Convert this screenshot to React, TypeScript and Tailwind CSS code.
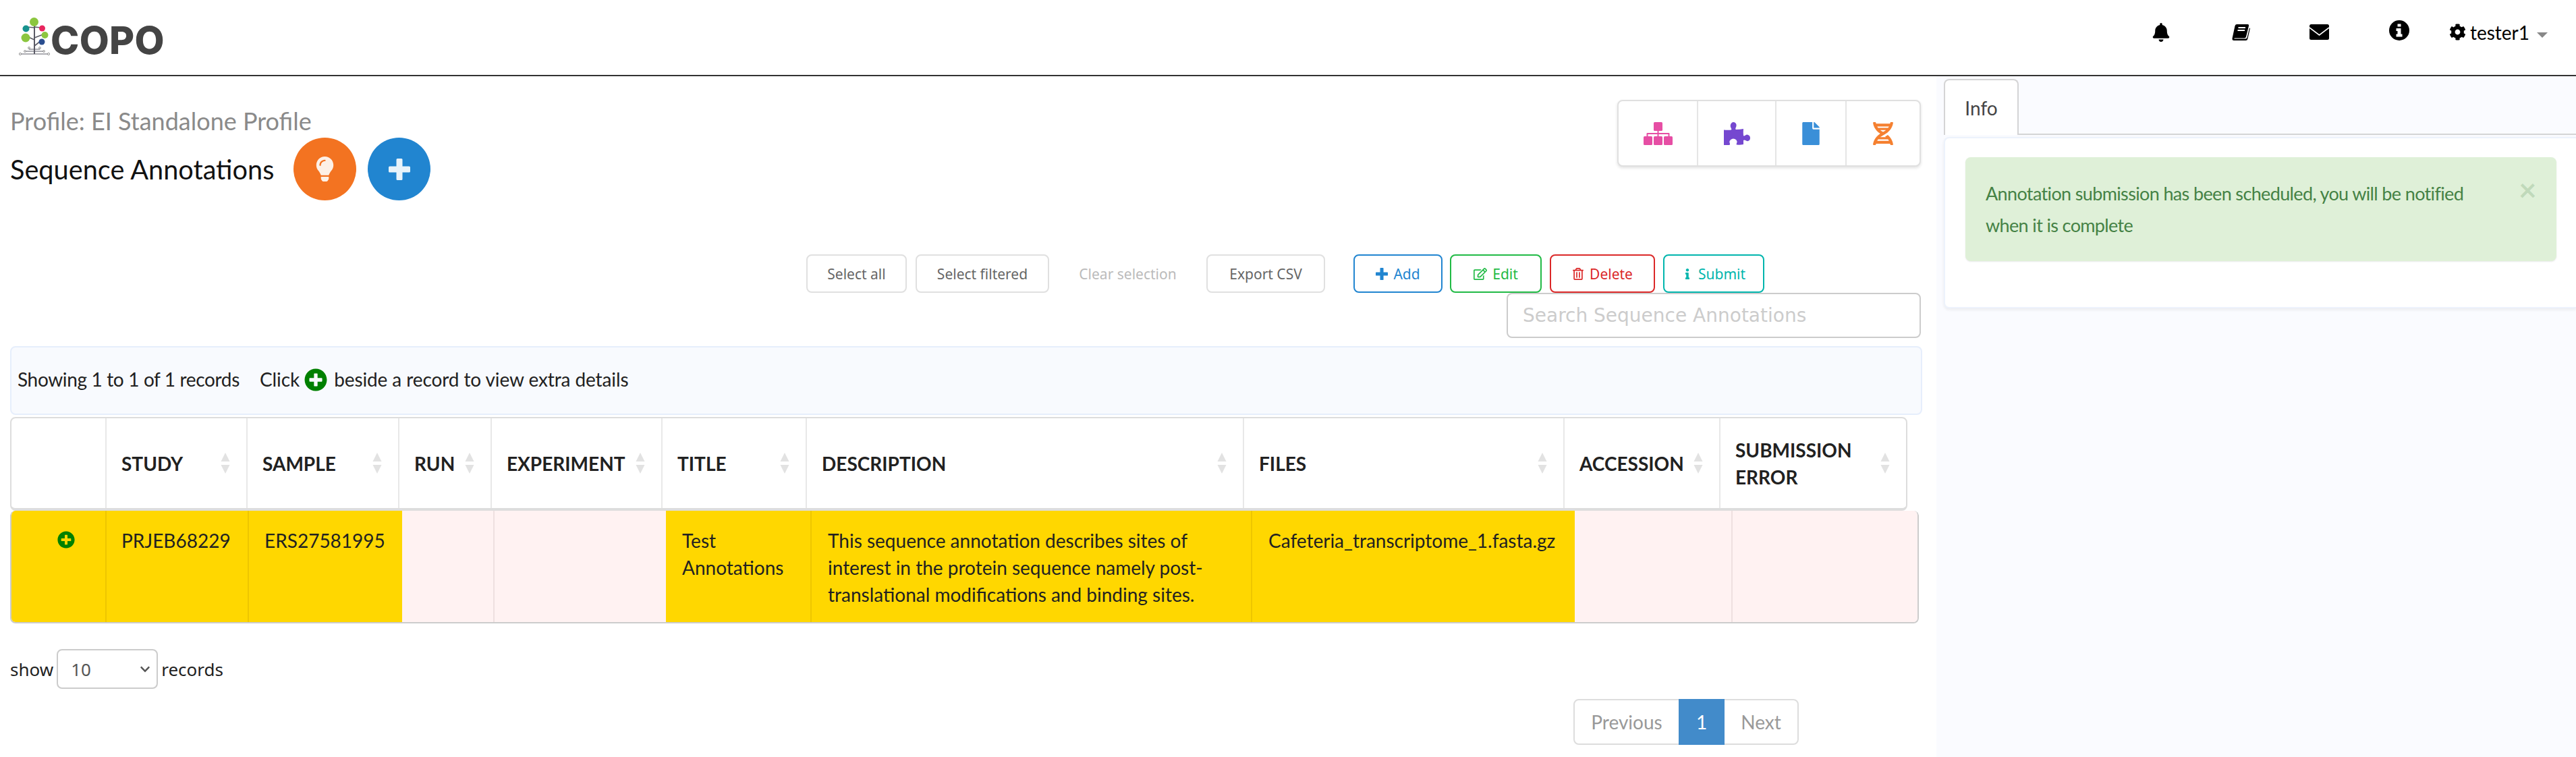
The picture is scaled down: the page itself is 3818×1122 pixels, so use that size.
// App.tsx - Sequence annotations page
import { FaBell, FaChevronDown, FaCog, FaDna, FaFile, FaInfo, FaLightbulb, FaPlusCircle, FaRegEdit, FaRegTrashAlt } from 'react-icons/fa'

const headerCols = [
  { label: '', width: 'w-[141px]' },
  { label: 'STUDY', width: 'w-[209px]' },
  { label: 'SAMPLE', width: 'w-[225px]' },
  { label: 'RUN', width: 'w-[137px]' },
  { label: 'EXPERIMENT', width: 'w-[253px]' },
  { label: 'TITLE', width: 'w-[214px]' },
  { label: 'DESCRIPTION', width: 'w-[648px]' },
  { label: 'FILES', width: 'w-[475px]' },
  { label: 'ACCESSION', width: 'w-[231px]' },
  { label: 'SUBMISSION ERROR', width: 'w-[275px]' },
]

function Logo() {
  return (
    <svg width="46" height="57" viewBox="0 0 46 57" className="shrink-0">
      <g stroke="#5b5b66" strokeWidth="1.6" fill="none">
        <path d="M23 6V54" strokeWidth="2" />
        <path d="M23 15L12 14M23 14L33 15M23 33L12 28M23 30L36 25M23 42L32 35" />
        <path d="M2 54H44M9 50H37M15 45V47H31V45" strokeWidth="1" />
      </g>
      <g fill="#fff" stroke="#777" strokeWidth="0.8">
        <circle cx="2" cy="54" r="1.6" />
        <circle cx="44" cy="54" r="1.6" />
        <circle cx="9" cy="50" r="1.4" />
        <circle cx="37" cy="50" r="1.4" />
        <circle cx="15" cy="45" r="1.4" />
        <circle cx="31" cy="45" r="1.4" />
      </g>
      <circle cx="22.5" cy="6.5" r="6.5" fill="#8cc63f" />
      <circle cx="10.5" cy="16.5" r="5" fill="#17938e" />
      <circle cx="34.5" cy="16" r="4.5" fill="#e8265e" />
      <circle cx="10" cy="30" r="6.5" fill="#8cc63f" />
      <circle cx="38.5" cy="26" r="5" fill="#8cc63f" />
      <circle cx="34" cy="36" r="4.5" fill="#2a4d8f" />
    </svg>
  )
}

function BookIcon() {
  return (
    <svg width="27" height="24" viewBox="0 0 27 24">
      <path d="M7 0H23.5Q25.5 0 25 2.5L21 18.5Q20.5 20.5 18.5 20.5H4.5Q3 20.5 3.4 21.6H20Q22 21.6 22.6 19.5L26 5.5L27 6L23.4 21.5Q23 24 20.5 24H3Q0 24 0.6 20.5L4.5 2.5Q5 0 7 0Z" fill="#000" />
      <path d="M9.5 5H20M8.5 9H19" stroke="#fff" strokeWidth="2" />
    </svg>
  )
}

function EnvelopeIcon() {
  return (
    <svg width="29" height="23" viewBox="0 0 29 23">
      <rect x="0" y="0" width="29" height="23" rx="2.5" fill="#000" />
      <path d="M0 5L14.5 16L29 5" stroke="#fff" strokeWidth="1.6" fill="none" />
    </svg>
  )
}

function InfoIcon() {
  return (
    <svg width="30" height="30" viewBox="0 0 30 30">
      <circle cx="15" cy="15" r="15" fill="#000" />
      <path d="M12.5 5.5H17.5V9.5H12.5ZM10.5 12H17.5V20.5H19.5V24.5H10.5V20.5H12.5V16H10.5Z" fill="#fff" />
    </svg>
  )
}

function PlusIcon({ size }: { size: number }) {
  return (
    <svg width={size} height={size} viewBox="0 0 32 32" fill="currentColor">
      <path d="M11.5 1.5Q11.5 0 13 0H19Q20.5 0 20.5 1.5V11.5H30.5Q32 11.5 32 13V19Q32 20.5 30.5 20.5H20.5V30.5Q20.5 32 19 32H13Q11.5 32 11.5 30.5V20.5H1.5Q0 20.5 0 19V13Q0 11.5 1.5 11.5H11.5Z" />
    </svg>
  )
}

function SitemapIcon() {
  return (
    <svg width="43" height="34" viewBox="0 0 43 34" fill="currentColor">
      <rect x="15" y="0" width="13" height="13" rx="1.5" />
      <rect x="0" y="21" width="13" height="13" rx="1.5" />
      <rect x="15" y="21" width="13" height="13" rx="1.5" />
      <rect x="30" y="21" width="13" height="13" rx="1.5" />
      <path d="M20.5 13H22.5V16H37.5Q38.5 16 38.5 17V21H36.5V18H22.5V21H20.5V18H6.5V21H4.5V17Q4.5 16 5.5 16H20.5Z" />
    </svg>
  )
}

function PuzzleIcon() {
  return (
    <svg width="39" height="34" viewBox="0 0 39 34" fill="currentColor">
      <path d="M0 11.5Q6 12 11 11.5Q12 10.5 10.5 8.5Q9 6.5 10 3.5Q11.5 0 14 0Q17.5 0 18.5 3.5Q19 6.5 17.5 8.5Q16.5 10.5 18 11Q24 11 29 10Q28.5 15 29 20Q30 21 32 19.5Q34 18 36 19Q39 20 39 23.5Q39 27 36 28Q34 28.5 32 27Q30 26 29 27V33Q24 34 19 33.5Q18 33 19 31.5Q20.5 29 18.5 26.5Q16.5 24.5 13.5 24.5Q10 25 8.5 28Q8 30 9 32Q9.5 33.5 8 34H0Z" />
    </svg>
  )
}

function SortArrows() {
  return (
    <svg width="14" height="31" viewBox="0 0 14 31" className="shrink-0">
      <path d="M7 0L13.5 13H0.5Z" fill="#e2e2e2" />
      <path d="M0.5 18H13.5L7 31Z" fill="#e2e2e2" />
    </svg>
  )
}

function ToolButton({ children, className }: { children: React.ReactNode; className: string }) {
  return (
    <button className={`h-[57px] rounded-lg border-2 bg-white font-['Noto_Sans',sans-serif] text-[21px] flex items-center justify-center gap-[8px] ${className}`}>
      {children}
    </button>
  )
}

export default function App() {
  return (
    <div className="w-[3818px] h-[1122px] overflow-hidden bg-white font-['Lato',sans-serif] text-[28px] leading-[40px] text-[#212121]">
      <header className="h-[113px] border-b-2 border-[#333] flex">
        <div className="flex items-start pl-[28px] pt-[26px]">
          <Logo />
          <span className="ml-[1px] mt-[4px] font-['Inter',sans-serif] font-extrabold text-[57px] leading-[60px] tracking-[0.3px] text-[#444]">COPO</span>
        </div>
        <nav className="ml-auto flex items-center pr-[42px] text-black pb-[16px]">
          <FaBell size={28} />
          <span className="ml-[91px]"><BookIcon /></span>
          <span className="ml-[88px]"><EnvelopeIcon /></span>
          <span className="ml-[89px] -mt-[6px]"><InfoIcon /></span>
          <FaCog size={25} className="ml-[59px]" />
          <span className="ml-[6px]">tester1</span>
          <span className="ml-[11px] mt-[8px] w-0 h-0 border-x-[8px] border-x-transparent border-t-[8px] border-t-[#888]" />
        </nav>
      </header>

      <div className="flex h-[1009px]">
        <main className="w-[2870px] px-[15px]">
          <div className="h-[264px] flex justify-between">
            <div className="pt-[44px]">
              <div className="text-[36px] leading-[44px] text-[#8a8a8a]">Profile: EI Standalone Profile</div>
              <div className="flex items-center mt-[3px]">
                <h1 className="text-[39.7px] leading-[50px] text-[#111] w-[420px]">Sequence Annotations</h1>
                <button className="w-[93px] h-[93px] rounded-full bg-[#f37321] flex items-center justify-center text-[#fdf0e6]">
                  <FaLightbulb size={37} />
                </button>
                <button className="ml-[17px] w-[93px] h-[93px] rounded-full bg-[#2185d0] flex items-center justify-center text-[#e8f3fa]">
                  <PlusIcon size={32} />
                </button>
              </div>
            </div>
            <div className="mt-[35px] mr-[8px] w-[450px] h-[99px] flex rounded-lg border-2 border-[#e0e0e0] bg-white shadow-[0_2px_4px_rgba(0,0,0,0.12)]">
              <div className="w-[118px] flex items-center justify-center border-r-2 border-[#e5e5e5] text-[#e64ea4]"><SitemapIcon /></div>
              <div className="w-[116px] flex items-center justify-center border-r-2 border-[#e5e5e5] text-[#7548d0]"><PuzzleIcon /></div>
              <div className="w-[104px] flex items-center justify-center border-r-2 border-[#e5e5e5] text-[#3a8fd8]"><FaFile size={34} /></div>
              <div className="flex-1 flex items-center justify-center text-[#f58030]"><FaDna size={34} /></div>
            </div>
          </div>

          <div className="flex justify-end pr-[240px]">
            <ToolButton className="w-[149px] border-[#e0e0e0] text-[#666]">Select all</ToolButton>
            <ToolButton className="ml-[13px] w-[198px] border-[#e0e0e0] text-[#666]">Select filtered</ToolButton>
            <span className="w-[233px] h-[57px] flex items-center justify-center font-['Noto_Sans',sans-serif] text-[21px] text-[#bbb]">Clear selection</span>
            <ToolButton className="w-[176px] border-[#e0e0e0] text-[#666]">Export CSV</ToolButton>
            <ToolButton className="ml-[42px] w-[132px] border-[#2185d0] text-[#2185d0]"><PlusIcon size={18} />Add</ToolButton>
            <ToolButton className="ml-[11px] w-[136px] border-[#21ba45] text-[#21ba45]"><FaRegEdit size={20} />Edit</ToolButton>
            <ToolButton className="ml-[12px] w-[156px] border-[#db2828] text-[#db2828]"><FaRegTrashAlt size={18} />Delete</ToolButton>
            <ToolButton className="ml-[12px] w-[150px] border-[#00b5ad] text-[#00b5ad]"><FaInfo size={16} />Submit</ToolButton>
          </div>

          <div className="flex justify-end pr-[8px]">
            <input
              readOnly
              placeholder="Search Sequence Annotations"
              className="w-[614px] h-[67px] rounded-lg border-2 border-[#ccc] pl-[22px] pr-[24px] font-['DejaVu_Sans',sans-serif] text-[28px] placeholder:text-[#ccc] outline-none"
            />
          </div>

          <div className="mt-[12px] mr-[6px] h-[102px] rounded-lg border-2 border-[#e6eefc] bg-[#f8fafe] flex items-start pt-[27px] pl-[9px]">
            <span className="tracking-[-0.35px]">Showing 1 to 1 of 1 records</span>
            <span className="ml-[30px] tracking-[-0.1px]">Click</span>
            <FaPlusCircle size={34} className="ml-[7px] mt-[4px] text-[#008000]" />
            <span className="ml-[10px] tracking-[-0.1px]">beside a record to view extra details</span>
          </div>

          <table className="mt-[3px] w-[2812px] table-fixed border-separate border-spacing-0 rounded-lg border-2 border-b-4 border-[#ddd] bg-white">
            <thead>
              <tr>
                {headerCols.map((col, i) => (
                  <th key={col.label} className={`${col.width} h-[133px] p-0 text-left font-bold ${i < headerCols.length - 1 ? 'border-r-2 border-[#e8e8e8]' : ''}`}>
                    {col.label && (
                      <div className="flex items-center justify-between pl-[22px] pr-[24px]">
                        <span>{col.label}</span>
                        <SortArrows />
                      </div>
                    )}
                  </th>
                ))}
              </tr>
            </thead>
          </table>

          <table className="w-[2829px] table-fixed border-separate border-spacing-0 rounded-lg border-2 border-t-0 border-[#ccc] overflow-hidden">
            <tbody>
              <tr className="align-top">
                <td className="w-[141px] h-[165px] pt-[30px] pl-[68px] bg-[#ffd700] border-r-2 border-[#eec600]">
                  <FaPlusCircle size={26} className="text-[#008000]" />
                </td>
                <td className="w-[211px] pt-[24px] pl-[22px] bg-[#ffd700] border-r-2 border-[#eec600]">PRJEB68229</td>
                <td className="w-[227px] pt-[24px] pl-[23px] bg-[#ffd700]">ERS27581995</td>
                <td className="w-[137px] bg-[#fff2f2] border-r-2 border-[#eee0e0]" />
                <td className="w-[254px] bg-[#fff2f2]" />
                <td className="w-[216px] pt-[24px] px-[24px] bg-[#ffd700] border-r-2 border-[#eec600]">Test Annotations</td>
                <td className="w-[653px] pt-[24px] px-[24px] bg-[#ffd700] border-r-2 border-[#eec600]">
                  This sequence annotation describes sites of interest in the protein sequence namely post-translational modifications and binding sites.
                </td>
                <td className="w-[478px] pt-[24px] pl-[24px] bg-[#ffd700]">Cafeteria_transcriptome_1.fasta.gz</td>
                <td className="w-[234px] bg-[#fff2f2] border-r-2 border-[#eee0e0]" />
                <td className="w-[274px] bg-[#fff2f2]" />
              </tr>
            </tbody>
          </table>

          <div className="mt-[38px] h-[59px] flex items-center font-['Noto_Sans',sans-serif] text-[26px]">
            <span>show</span>
            <div className="relative ml-[5px] mr-[5px]">
              <select className="block w-[150px] h-[59px] appearance-none rounded-lg border-2 border-[#ccc] bg-white pl-[19px] text-[#555]" defaultValue="10">
                <option value="10">10</option>
              </select>
              <FaChevronDown size={16} className="absolute right-[11px] top-[22px] text-[#555]" />
            </div>
            <span>records</span>
          </div>

          <div className="mt-[15px] mr-[189px] flex justify-end">
            <div className="h-[68px] flex items-stretch rounded-lg border-2 border-[#ddd] text-[#999]">
              <span className="w-[154px] flex items-center justify-center">Previous</span>
              <span className="w-[68px] -my-[2px] flex items-center justify-center bg-[#428bca] text-white">1</span>
              <span className="w-[108px] flex items-center justify-center">Next</span>
            </div>
          </div>
        </main>

        <aside className="w-[948px] bg-[#fafbff] pl-[11px] pt-[4px]">
          <div className="h-[83px] flex border-b-2 border-[#d4d4d5]">
            <div className="w-[111px] h-[83px] rounded-t-lg border-2 border-b-0 border-[#d4d4d5] bg-white flex items-center justify-center text-[#444]">Info</div>
          </div>
          <div className="mt-[3px] h-[254px] rounded-l-lg border-2 border-r-0 border-[#edf2fc] bg-white pt-[28px] pl-[30px] pr-[29px] shadow-[0_2px_4px_rgba(34,36,38,0.08)]">
            <div className="relative h-[154px] rounded-lg bg-[#dff0d8] pl-[30px] pr-[110px] pt-[30px] text-[27px] text-[#458245] leading-[47px] tracking-[-0.64px] shadow-[0_1px_2px_rgba(34,36,38,0.1)]">
              Annotation submission has been scheduled, you will be notified when it is complete
              <span className="absolute right-[30px] top-[24px] font-bold text-[#3c763d]/20 text-[46px] leading-[48px]">×</span>
            </div>
          </div>
        </aside>
      </div>
    </div>
  )
}
